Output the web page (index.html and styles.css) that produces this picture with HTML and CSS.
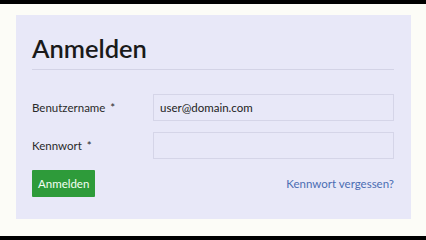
FILE: index.html
```html
<!DOCTYPE html>
<html lang="de">

<head>
    <meta charset="UTF-8">
    <meta name="viewport" content="width=device-width, initial-scale=1.0">
    <title>Anmelden</title>
    <link rel="stylesheet" href="styles.css">
</head>

<body>
    <div class="screen">
        <div class="login-panel">
            <h1>Anmelden</h1>
            <form class="login-form">
                <label for="user">Benutzername <span class="req">*</span></label>
                <input id="user" type="text" value="user@domain.com">
                <label for="pass">Kennwort <span class="req">*</span></label>
                <input id="pass" type="password">
                <div class="actions">
                    <button type="button" class="btn-login">Anmelden</button>
                    <a href="#" class="forgot">Kennwort vergessen?</a>
                </div>
            </form>
        </div>
    </div>
</body>

</html>
```

FILE: styles.css
```css
html,
body {
    margin: 0;
    height: 100%;
}

body {
    font-family: Lato, 'Noto Sans', sans-serif;
    background: #fcfcf7;
    color: #2a2a2a;
    font-size: 11.5px;
}

.screen {
    box-sizing: border-box;
    height: 240px;
    border-top: 4px solid #000;
    border-bottom: 4px solid #000;
    padding: 11px 15px 0 16px;
}

.login-panel {
    box-sizing: border-box;
    height: 204px;
    background: #e8e8f8;
    padding: 0 17px 0 16px;
}

h1 {
    margin: 0;
    padding-top: 18px;
    padding-bottom: 6px;
    font-size: 25.5px;
    font-weight: 600;
    line-height: 30px;
    color: #1a1a1a;
    border-bottom: 1px solid #d3d3e6;
}

.login-form {
    display: grid;
    grid-template-columns: 121px 1fr;
    align-items: center;
    row-gap: 11px;
    margin-top: 24px;
}

.req {
    margin-left: 2px;
}

input {
    box-sizing: border-box;
    height: 27px;
    border: 1px solid #d5d5e8;
    background: transparent;
    font: inherit;
    color: #222;
    padding: 0 6px;
}

.actions {
    grid-column: 1 / 3;
    display: flex;
    justify-content: space-between;
    align-items: center;
}

.btn-login {
    background: #2e9b3a;
    color: #f4fff4;
    border: none;
    border-radius: 1px;
    font: inherit;
    height: 27px;
    padding: 0 6px;
}

.forgot {
    color: #4b6db3;
    text-decoration: none;
}
```
